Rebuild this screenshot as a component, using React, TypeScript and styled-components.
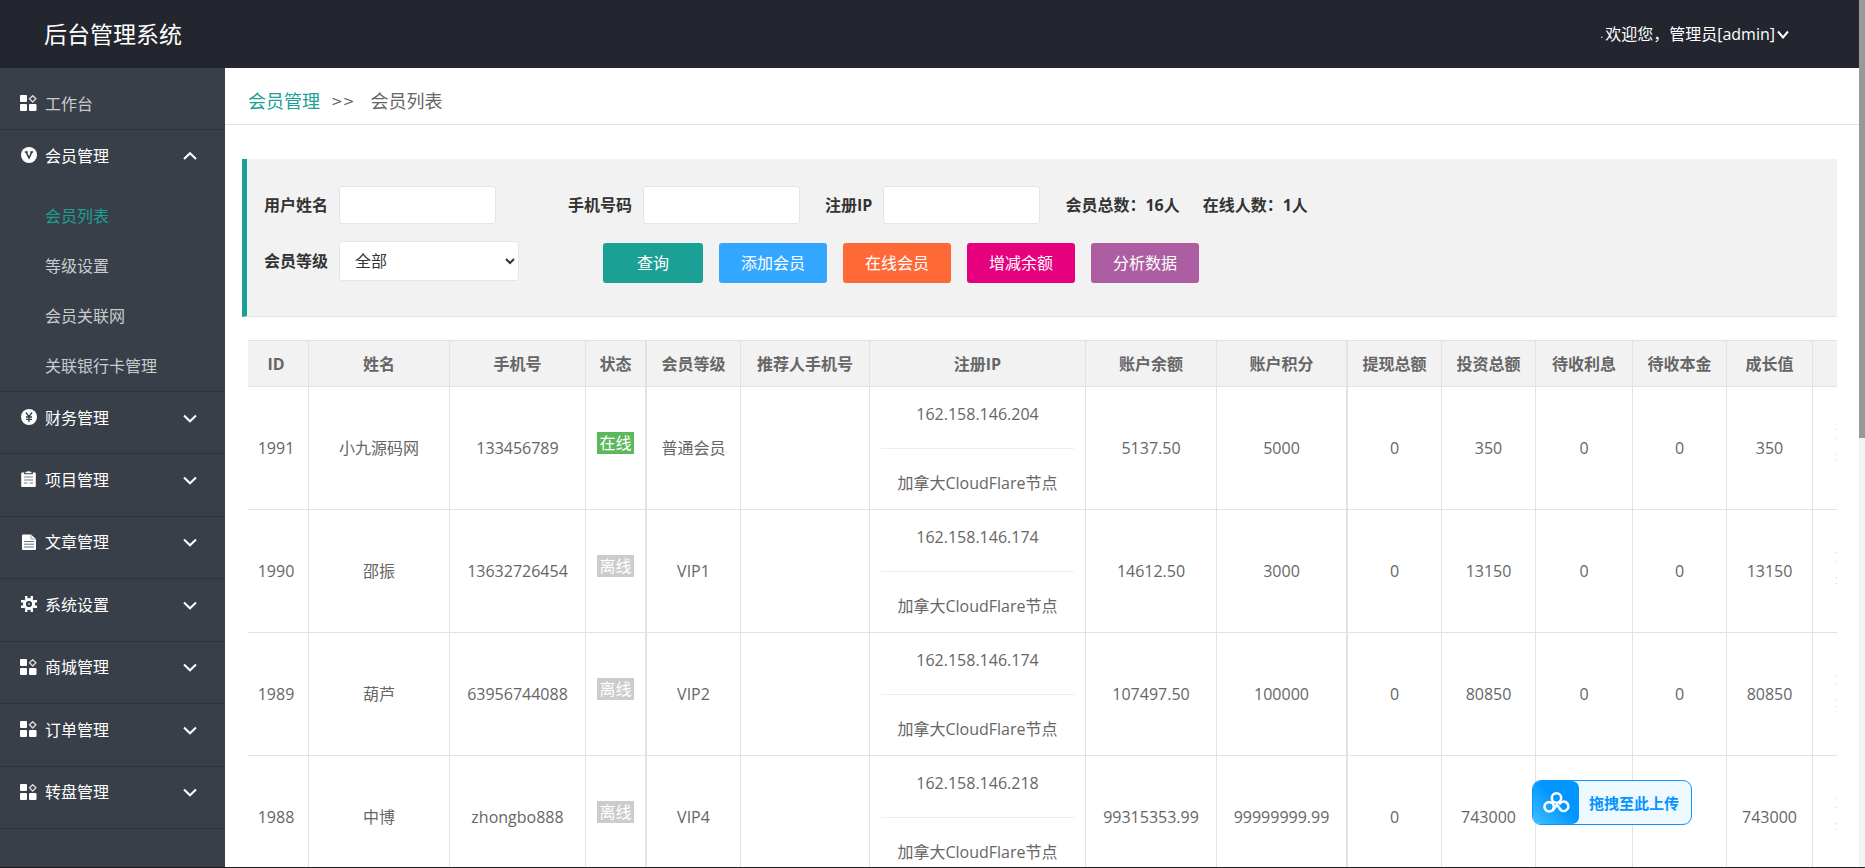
import React from "react";
import styled, { createGlobalStyle, css } from "styled-components";

const colors = {
  header: "#23262e",
  side: "#383f48",
  sideLine: "#2e333c",
  accent: "#1aa094",
  line: "#e2e2e2",
  panel: "#f2f2f2",
  text: "#666666",
};

const GlobalStyle = createGlobalStyle`
  *, *::before, *::after { box-sizing: border-box; }
  html, body { margin: 0; height: 100%; overflow: hidden; }
  body {
    font-family: "Open Sans", "Noto Sans CJK SC", sans-serif;
    font-size: 16px;
    line-height: 24px;
    color: ${colors.text};
    background: #fff;
  }
  button, input, select { font: inherit; }
  a { color: inherit; text-decoration: none; }
`;

const Shell = styled.div`
  display: grid;
  grid-template-columns: minmax(0, 1fr) 6px;
  height: 100vh;
  overflow: hidden;
  border-bottom: 1px solid #1c1c1c;
`;

const Page = styled.div`
  display: grid;
  grid-template: 68px minmax(0, 1fr) / 225px minmax(0, 1fr);
  min-height: 0;
`;

const ScrollTrack = styled.div`
  background: #f3f3f3;
`;

const ScrollThumb = styled.div`
  height: 438px;
  background: #999999;
`;

const Header = styled.header`
  grid-column: 1 / -1;
  display: flex;
  align-items: center;
  justify-content: space-between;
  padding: 0 70px 0 44px;
  background: ${colors.header};
  color: #fff;
`;

const Title = styled.h1`
  margin: 0;
  font-size: 23px;
  line-height: 32px;
  font-weight: 400;
`;

const UserMenu = styled.button`
  display: flex;
  align-items: center;
  gap: 2px;
  padding: 0;
  border: 0;
  background: none;
  color: #fff;
`;

const UserDot = styled.span`
  font-size: 10px;
`;

const Sidebar = styled.nav`
  background: ${colors.side};
  color: #fff;
  overflow: hidden;
`;

const itemBase = css`
  display: flex;
  align-items: center;
  width: 100%;
  height: 51px;
  gap: 8px;
  padding: 0 28px 0 20px;
  border: 0;
  background: none;
  text-align: left;
`;

const HomeLink = styled.a`
  ${itemBase}
  height: 62px;
  padding-top: 10px;
  color: #c9cbce;
  border-bottom: 1px solid ${colors.sideLine};
`;

const GroupButton = styled.button`
  ${itemBase}
  color: #fff;
`;

const GroupLabel = styled.span`
  flex: 1;
`;

const OpenGroup = styled.div`
  border-bottom: 1px solid ${colors.sideLine};
`;

const SubMenu = styled.ul`
  list-style: none;
  margin: 0;
  padding: 10px 0 0 45px;
`;

const SubLink = styled.a<{ $active?: boolean }>`
  display: block;
  line-height: 50px;
  color: ${(p) => (p.$active ? colors.accent : "#c9cbce")};
`;

const Groups = styled.div`
  display: grid;
  grid-auto-rows: 1fr;
  min-height: 437px;
`;

const Group = styled.div`
  border-bottom: 1px solid ${colors.sideLine};
`;

const Main = styled.main`
  min-width: 0;
  overflow: hidden;
`;

const Breadcrumb = styled.div`
  display: flex;
  align-items: center;
  height: 57px;
  padding: 10px 23px 0;
  font-size: 18px;
  border-bottom: 1px solid ${colors.line};
`;

const CrumbLink = styled.a`
  color: ${colors.accent};
`;

const CrumbMark = styled.span`
  margin: 0 16px 0 11px;
  font: 14px/24px "DejaVu Sans", sans-serif;
`;

const SearchPanel = styled.form`
  display: flex;
  flex-direction: column;
  gap: 17px;
  min-height: 158px;
  margin: 34px 22px 23px 17px;
  padding: 27px 17px;
  background: ${colors.panel};
  border-left: 5px solid ${colors.accent};
  border-bottom: 1px solid ${colors.line};
  color: #333;
`;

const FormRow = styled.div`
  display: flex;
  align-items: flex-start;
`;

const Field = styled.label<{ $after: number }>`
  display: flex;
  align-items: center;
  gap: 11px;
  margin-right: ${(p) => p.$after}px;
  font-weight: 700;
  white-space: nowrap;
`;

const TextBox = styled.input`
  width: 157px;
  height: 38px;
  padding: 0 10px;
  background: #fff;
  border: 1px solid #e6e6e6;
  border-radius: 3px;
`;

const LevelSelect = styled.select`
  width: 180px;
  height: 40px;
  padding: 0 0 0 11px;
  background: #fff;
  border: 1px solid #e6e6e6;
  border-radius: 3px;
  color: #333;
  font-weight: 400;
`;

const Stats = styled.div`
  display: flex;
  gap: 23px;
  line-height: 38px;
  font-weight: 700;
  white-space: nowrap;
`;

const Actions = styled.div`
  display: flex;
  gap: 16px;
  padding-top: 2px;
`;

const ActionButton = styled.button<{ $bg: string; $wide?: boolean }>`
  height: 40px;
  padding: 0 ${(p) => (p.$wide ? 34 : 22)}px;
  border: 0;
  border-radius: 3px;
  background: ${(p) => p.$bg};
  color: #fff;
  white-space: nowrap;
`;

const TableWrap = styled.div`
  margin: 0 22px 0 23px;
  overflow: hidden;
`;

const Table = styled.table`
  table-layout: fixed;
  width: 1700px;
  border-collapse: separate;
  border-spacing: 0;
  text-align: center;
`;

const cell = css<{ $double?: boolean }>`
  padding: 0 11px;
  border-right: ${(p) => (p.$double ? 2 : 1)}px solid ${colors.line};
  border-bottom: 1px solid ${colors.line};
  white-space: nowrap;

  &:first-child {
    padding: 0 12px 0 8px;
  }
`;

const Th = styled.th<{ $double?: boolean }>`
  ${cell}
  padding: 0;
  height: 47px;
  border-top: 1px solid ${colors.line};
  background: ${colors.panel};
  font-weight: 700;
`;

const Td = styled.td<{ $double?: boolean }>`
  ${cell}
  height: 123px;
`;

const ActionTd = styled(Td)`
  padding: 0 23px;
  text-align: left;
`;

const Badge = styled.span<{ $online: boolean }>`
  display: inline-block;
  margin-bottom: 12px;
  padding: 0 2px;
  line-height: 22px;
  background: ${(p) => (p.$online ? "#5cb85c" : "#cccccc")};
  color: #fff;
`;

const IpRule = styled.hr`
  margin: 22px 0;
  border: 0;
  border-top: 1px solid #eeeeee;
`;

const UploadFloat = styled.button`
  position: fixed;
  right: 173px;
  bottom: 43px;
  display: flex;
  align-items: center;
  width: 160px;
  height: 45px;
  padding: 0;
  overflow: hidden;
  border: 1px solid #0c97ff;
  border-radius: 9px;
  background: #eef8ff;
  color: #0494ff;
  font-size: 15px;
  font-weight: 700;
`;

const UploadMark = styled.span`
  display: flex;
  align-items: center;
  justify-content: center;
  width: 46px;
  height: 100%;
  margin-right: 10px;
  border-radius: 0 7px 7px 0;
  background: linear-gradient(45deg, #3fbfff 0%, #0095ff 55%);
`;

type IconName = "grid" | "vip" | "yen" | "clipboard" | "doc" | "gear";

function Icon({ name }: { name: IconName }) {
  return (
    <svg width="17" height="17" viewBox="0 0 17 17" fill="#fff" aria-hidden="true">
      {name === "grid" && (
        <>
          <rect x="0" y="0" width="7" height="7" rx="1" />
          <rect x="0" y="9" width="7" height="7" rx="1" />
          <rect x="9" y="9" width="7.5" height="7" rx="1" />
          <path d="M12.7 .7 15.9 3.8 12.7 6.9 9.5 3.8Z" fill="none" stroke="#d6d8da" strokeWidth="1.4" strokeLinejoin="round" />
        </>
      )}
      {name === "vip" && (
        <>
          <circle cx="9" cy="8" r="8" />
          <path d="M4.800 5h3M10.200 5h3M6.200 5.200 9 11l2.800-5.800" fill="none" stroke="#383f48" strokeWidth="1.600" />
        </>
      )}
      {name === "yen" && (
        <>
          <circle cx="9" cy="8" r="8" />
          <path d="M6 3.500 9 7.600 12 3.500M6 8h6M6 10.400h6M9 8v5" fill="none" stroke="#383f48" strokeWidth="1.300" />
        </>
      )}
      {name === "clipboard" && (
        <>
          <path d="M2 1.500h2.200v1.800h8.600V1.500H15a.8.8 0 0 1 .8.8v13a.8.8 0 0 1-.8.800H2a.8.8 0 0 1-.8-.8v-13a.8.8 0 0 1 .8-.8Z" />
          <path d="M5.500.800h1.500L8.500 0 10 .8h1.500v1.500h-6Z" />
          <path d="M4 6h9M4 9h9M4 12h3.500M9.500 12H13" stroke="#7b7f87" strokeWidth="1.200" />
        </>
      )}
      {name === "doc" && (
        <>
          <path d="M3 .5h8l5 4.500V15a1 1 0 0 1-1 1H3a1 1 0 0 1-1-1V1.500a1 1 0 0 1 1-1Z" />
          <path d="M11 .5V5h5" fill="none" stroke="#8a8e95" strokeWidth=".8" />
          <path d="M4 7.500h10M4 10.200h10M4 13h10" stroke="#6d727a" strokeWidth="1" />
        </>
      )}
      {name === "gear" && (
        <>
          <circle cx="9" cy="8" r="4.600" fill="none" stroke="#fff" strokeWidth="3" />
          <path
            d="M6.200 0v3M11.800 0v3M6.200 13v3M11.800 13v3M1 5.200h3M1 10.800h3M14 5.200h3M14 10.800h3"
            stroke="#fff"
            strokeWidth="2.400"
          />
          <circle cx="9" cy="8" r="1.100" fill="#b8babd" />
        </>
      )}
    </svg>
  );
}

function Chevron({ up }: { up?: boolean }) {
  return (
    <svg width="14" height="10" viewBox="0 0 14 10" fill="none" stroke="#fff" strokeWidth="2" aria-hidden="true">
      <path d={up ? "M1 8 7 2.200 13 8" : "M1 2.500 7 8.300 13 2.500"} />
    </svg>
  );
}

const subItems = ["会员列表", "等级设置", "会员关联网", "关联银行卡管理"];

const groups: { label: string; icon: IconName }[] = [
  { label: "财务管理", icon: "yen" },
  { label: "项目管理", icon: "clipboard" },
  { label: "文章管理", icon: "doc" },
  { label: "系统设置", icon: "gear" },
  { label: "商城管理", icon: "grid" },
  { label: "订单管理", icon: "grid" },
  { label: "转盘管理", icon: "grid" },
];

const columns: { title: string; width: number; double?: boolean }[] = [
  { title: "ID", width: 61 },
  { title: "姓名", width: 141 },
  { title: "手机号", width: 136 },
  { title: "状态", width: 61, double: true },
  { title: "会员等级", width: 94 },
  { title: "推荐人手机号", width: 129 },
  { title: "注册IP", width: 216 },
  { title: "账户余额", width: 131 },
  { title: "账户积分", width: 131, double: true },
  { title: "提现总额", width: 94 },
  { title: "投资总额", width: 94 },
  { title: "待收利息", width: 97 },
  { title: "待收本金", width: 94 },
  { title: "成长值", width: 86 },
  { title: "", width: 135 },
];

interface Member {
  id: number;
  name: string;
  phone: string;
  online: boolean;
  level: string;
  ip: string;
  balance: string;
  points: string;
  invested: string;
  interest?: string;
  principal?: string;
}

const members: Member[] = [
  { id: 1991, name: "小九源码网", phone: "133456789", online: true, level: "普通会员", ip: "162.158.146.204", balance: "5137.50", points: "5000", invested: "350", interest: "0", principal: "0" },
  { id: 1990, name: "邵振", phone: "13632726454", online: false, level: "VIP1", ip: "162.158.146.174", balance: "14612.50", points: "3000", invested: "13150", interest: "0", principal: "0" },
  { id: 1989, name: "葫芦", phone: "63956744088", online: false, level: "VIP2", ip: "162.158.146.174", balance: "107497.50", points: "100000", invested: "80850", interest: "0", principal: "0" },
  { id: 1988, name: "中博", phone: "zhongbo888", online: false, level: "VIP4", ip: "162.158.146.218", balance: "99315353.99", points: "99999999.99", invested: "743000" },
];

function MemberRow({ m }: { m: Member }) {
  return (
    <tr>
      <Td>{m.id}</Td>
      <Td>{m.name}</Td>
      <Td>{m.phone}</Td>
      <Td $double>
        <Badge $online={m.online}>{m.online ? "在线" : "离线"}</Badge>
      </Td>
      <Td>{m.level}</Td>
      <Td />
      <Td>
        {m.ip}
        <IpRule />
        加拿大CloudFlare节点
      </Td>
      <Td>{m.balance}</Td>
      <Td $double>{m.points}</Td>
      <Td>0</Td>
      <Td>{m.invested}</Td>
      <Td>{m.interest}</Td>
      <Td>{m.principal}</Td>
      <Td>{m.invested}</Td>
      <ActionTd>
        <svg width="1" height="34" viewBox="0 0 1 34" fill="#f3cf9c" aria-hidden="true">
          <path d="M0 1h1v1H0ZM0 10h1v1H0ZM0 26h1v1H0ZM0 32h1v1H0Z" />
        </svg>
      </ActionTd>
    </tr>
  );
}

export default function App() {
  return (
    <>
      <GlobalStyle />
      <Shell>
        <Page>
          <Header>
            <Title>后台管理系统</Title>
            <UserMenu type="button">
              <UserDot>.</UserDot>
              <span>欢迎您，管理员[admin]</span>
              <svg width="12" height="10" viewBox="0 0 12 10" fill="none" stroke="#fff" strokeWidth="2" aria-hidden="true">
                <path d="M1 2.500 6 8.500 11 2.500" />
              </svg>
            </UserMenu>
          </Header>
          <Sidebar>
            <HomeLink href="#home">
              <Icon name="grid" />
              工作台
            </HomeLink>
            <OpenGroup>
              <GroupButton type="button" aria-expanded="true">
                <Icon name="vip" />
                <GroupLabel>会员管理</GroupLabel>
                <Chevron up />
              </GroupButton>
              <SubMenu>
                {subItems.map((label, i) => (
                  <li key={label}>
                    <SubLink href="#members" $active={i === 0}>
                      {label}
                    </SubLink>
                  </li>
                ))}
              </SubMenu>
            </OpenGroup>
            <Groups>
              {groups.map((g) => (
                <Group key={g.label}>
                  <GroupButton type="button" aria-expanded="false">
                    <Icon name={g.icon} />
                    <GroupLabel>{g.label}</GroupLabel>
                    <Chevron />
                  </GroupButton>
                </Group>
              ))}
            </Groups>
          </Sidebar>
          <Main>
            <Breadcrumb>
              <CrumbLink href="#members">会员管理</CrumbLink>
              <CrumbMark>&gt;&gt;</CrumbMark>
              <span>会员列表</span>
            </Breadcrumb>
            <SearchPanel onSubmit={(e) => e.preventDefault()}>
              <FormRow>
                <Field $after={72}>
                  用户姓名
                  <TextBox type="text" name="username" />
                </Field>
                <Field $after={25}>
                  手机号码
                  <TextBox type="text" name="phone" />
                </Field>
                <Field $after={25}>
                  注册IP
                  <TextBox type="text" name="ip" />
                </Field>
                <Stats>
                  <span>会员总数：16人</span>
                  <span>在线人数：1人</span>
                </Stats>
              </FormRow>
              <FormRow>
                <Field $after={84}>
                  会员等级
                  <LevelSelect name="level" defaultValue="all">
                    <option value="all">全部</option>
                  </LevelSelect>
                </Field>
                <Actions>
                  <ActionButton type="submit" $bg="#1aa094" $wide>
                    查询
                  </ActionButton>
                  <ActionButton type="button" $bg="#33a7ff">添加会员</ActionButton>
                  <ActionButton type="button" $bg="#ff6837">在线会员</ActionButton>
                  <ActionButton type="button" $bg="#e6007e">增减余额</ActionButton>
                  <ActionButton type="button" $bg="#ad5da1">分析数据</ActionButton>
                </Actions>
              </FormRow>
            </SearchPanel>
            <TableWrap>
              <Table>
                <colgroup>
                  {columns.map((c, i) => (
                    <col key={i} width={c.width} />
                  ))}
                </colgroup>
                <thead>
                  <tr>
                    {columns.map((c, i) => (
                      <Th key={i} $double={c.double}>
                        {c.title}
                      </Th>
                    ))}
                  </tr>
                </thead>
                <tbody>
                  {members.map((m) => (
                    <MemberRow key={m.id} m={m} />
                  ))}
                </tbody>
              </Table>
            </TableWrap>
          </Main>
        </Page>
        <ScrollTrack>
          <ScrollThumb />
        </ScrollTrack>
      </Shell>
      <UploadFloat type="button">
        <UploadMark>
          <svg width="27" height="21" viewBox="0 0 27 21" fill="none" stroke="#fff" strokeWidth="2.600" strokeLinecap="round" aria-hidden="true">
            <circle cx="13.500" cy="6" r="4.700" />
            <circle cx="6.200" cy="14.800" r="4.700" />
            <path d="M10 18 14 12.800M14 12.800 18 18.200A4.700 4.700 0 1 0 17 11.400" />
          </svg>
        </UploadMark>
        拖拽至此上传
      </UploadFloat>
    </>
  );
}
